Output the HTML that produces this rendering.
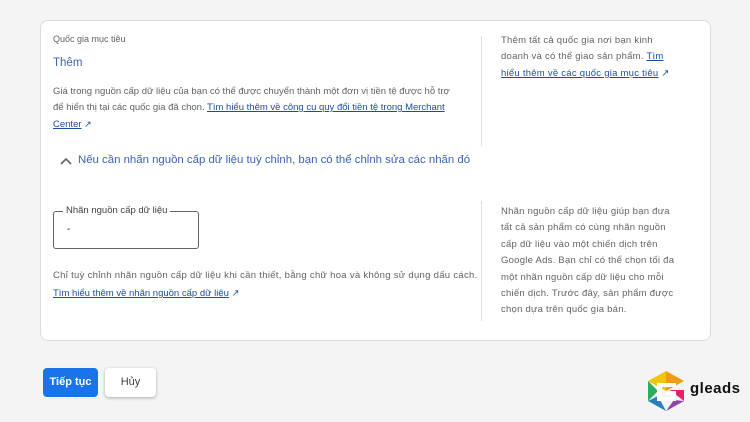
<!DOCTYPE html>
<html><head><meta charset="utf-8"><style>
body{margin:0;width:750px;height:422px;background:#f4f4f4;font-family:"Liberation Sans",Arial,sans-serif;position:relative;overflow:hidden;color:#5f6368}
.card{position:absolute;left:40px;top:20px;width:671px;height:321px;background:#fff;border:1px solid #dadce0;border-radius:8px;box-sizing:border-box}
.t{position:absolute;white-space:nowrap}
.s{font-size:9.5px;line-height:16px}
a{color:#1a4d9e;text-decoration:underline}
.div{position:absolute;left:440px;width:1px;background:#e0e0e0}
.right{position:absolute;left:460px;font-size:9.5px;line-height:16.4px;color:#5f6368;white-space:nowrap;letter-spacing:0.25px}
</style></head><body>
<div class="card">
 <div class="t s" style="left:12px;top:10px;font-size:9px;color:#5f6368">Quốc gia mục tiêu</div>
 <div class="t" style="left:12px;top:36px;font-size:11.5px;color:#3c62b0">Thêm</div>
 <div class="t s" style="left:12px;top:63px">Giá trong nguồn cấp dữ liệu của bạn có thể được chuyển thành một đơn vị tiền tệ được hỗ trợ</div>
 <div class="t s" style="left:12px;top:79px">để hiển thị tại các quốc gia đã chọn. <a>Tìm hiểu thêm về công cụ quy đổi tiền tệ trong Merchant</a></div>
 <div class="t s" style="left:12px;top:95px"><a>Center</a> <span style="color:#1a4d9e;font-size:9px">↗</span></div>
 <svg style="position:absolute;left:18px;top:135px" width="14" height="10"><path d="M2 8 L7 3 L12 8" fill="none" stroke="#5f6368" stroke-width="1.6"/></svg>
 <div class="t" style="left:37px;top:133px;font-size:11.4px;color:#3c62b0">Nếu cần nhãn nguồn cấp dữ liệu tuỳ chỉnh, bạn có thể chỉnh sửa các nhãn đó</div>
 <div class="div" style="top:15px;height:110px"></div>
 <div class="right" style="top:12px">Thêm tất cả quốc gia nơi bạn kinh<br>doanh và có thể giao sản phẩm. <a>Tìm</a><br><a>hiểu thêm về các quốc gia mục tiêu</a> <span style="color:#1a4d9e">↗</span></div>
 <div style="position:absolute;left:12px;top:190px;width:146px;height:38px;border:1px solid #5f6368;border-radius:3px;box-sizing:border-box"></div>
 <div class="t" style="left:22px;top:184px;font-size:9.5px;background:#fff;padding:0 3px;color:#3c4043">Nhãn nguồn cấp dữ liệu</div>
 <div class="t" style="left:26px;top:203px;font-size:10px;color:#202124">-</div>
 <div class="t s" style="left:12px;top:247px;letter-spacing:0.3px">Chỉ tuỳ chỉnh nhãn nguồn cấp dữ liệu khi cần thiết, bằng chữ hoa và không sử dụng dấu cách.</div>
 <div class="t s" style="left:12px;top:265px"><a>Tìm hiểu thêm về nhãn nguồn cấp dữ liệu</a> <span style="color:#1a4d9e">↗</span></div>
 <div class="div" style="top:180px;height:120px"></div>
 <div class="right" style="top:183px">Nhãn nguồn cấp dữ liệu giúp bạn đưa<br>tất cả sản phẩm có cùng nhãn nguồn<br>cấp dữ liệu vào một chiến dịch trên<br>Google Ads. Bạn chỉ có thể chọn tối đa<br>một nhãn nguồn cấp dữ liệu cho mỗi<br>chiến dịch. Trước đây, sản phẩm được<br>chọn dựa trên quốc gia bán.</div>
</div>
<div style="position:absolute;left:43px;top:368px;width:55px;height:29px;background:#1a73e8;border-radius:4px;color:#fff;font-size:11px;font-weight:bold;text-align:center;line-height:29px">Tiếp tục</div>
<div style="position:absolute;left:105px;top:368px;width:51px;height:29px;background:#fff;border-radius:4px;box-shadow:0 1px 3px rgba(0,0,0,.3);color:#3c4043;font-size:11px;text-align:center;line-height:29px">Hủy</div>
<svg style="position:absolute;left:646px;top:370px" width="40" height="42" viewBox="0 0 40 42">
 <polygon points="20,1 38,11 20,21" fill="#f39c12"/>
 <polygon points="20,1 2,11 20,21" fill="#f1c40f"/>
 <polygon points="2,11 2,31 12,21" fill="#27ae60"/>
 <polygon points="2,31 20,41 12,26" fill="#2980b9"/>
 <polygon points="20,41 38,31 28,30" fill="#8e44ad"/>
 <polygon points="38,31 38,20 24,20" fill="#e91e63"/>
 <path d="M30 13 H11 V31 H30 V21 H20 V25 H25 V27 H16 V17 H30 Z" fill="#fff"/>
</svg>
<div class="t" style="left:690px;top:380px;font-size:15px;font-weight:bold;color:#111;letter-spacing:0.5px">gleads</div>
</body></html>
